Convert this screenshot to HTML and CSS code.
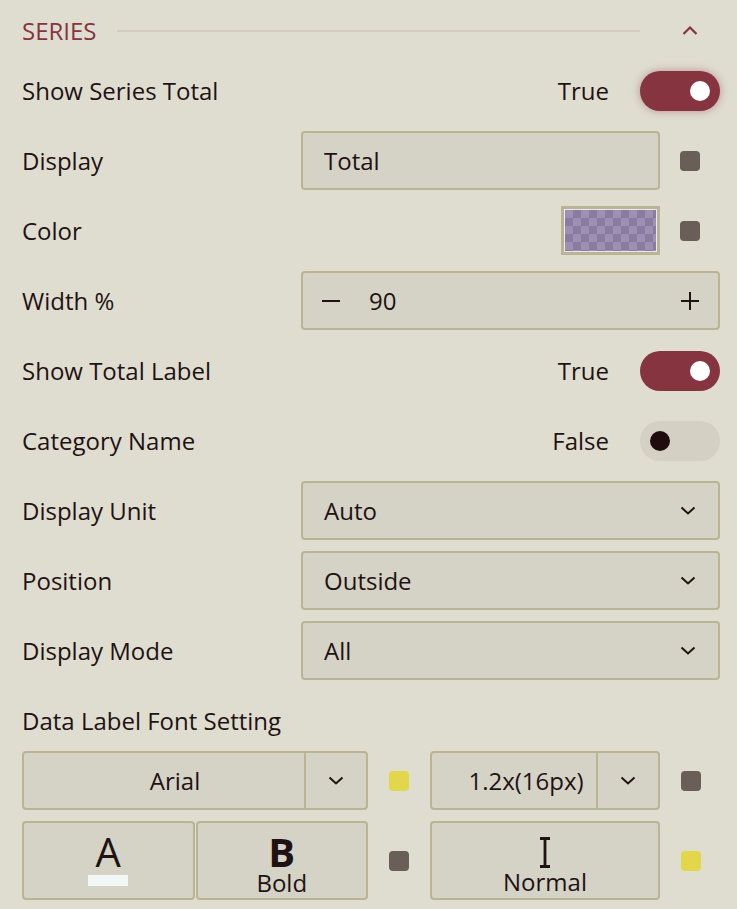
FILE: index.html
```html
<!DOCTYPE html>
<html>
<head>
    <meta charset="utf-8">
    <title>Series</title>
    <link rel="stylesheet" href="styles.css">
</head>
<body>
    <div class="panel">
        <!-- 标题 -->
        <div class="head">
            <span class="head_title">SERIES</span>
            <span class="head_line"></span>
            <svg class="head_arrow" width="16" height="9" viewBox="0 0 16 9"><polyline points="1.5,8 8,1.5 14.5,8" fill="none" stroke="#853440" stroke-width="2.2"/></svg>
        </div>

        <div class="rows">
            <div class="row">
                <div class="label">Show Series Total</div>
                <div class="switch_wrap">
                    <span class="switch_text">True</span>
                    <span class="switch on glow"><i></i></span>
                </div>
            </div>

            <div class="row">
                <div class="label">Display</div>
                <div class="ctrl">
                    <div class="field">Total</div>
                    <span class="dot gray"></span>
                </div>
            </div>

            <div class="row">
                <div class="label">Color</div>
                <div class="ctrl end">
                    <div class="swatch"><div class="checker"></div></div>
                    <span class="dot gray"></span>
                </div>
            </div>

            <div class="row">
                <div class="label">Width %</div>
                <div class="field stepper">
                    <svg width="18" height="18" viewBox="0 0 18 18"><path d="M0 9H18" stroke="#1f1213" stroke-width="2"/></svg>
                    <span class="step_val">90</span>
                    <svg width="18" height="18" viewBox="0 0 18 18"><path d="M0 9H18M9 0V18" stroke="#1f1213" stroke-width="2"/></svg>
                </div>
            </div>

            <div class="row">
                <div class="label">Show Total Label</div>
                <div class="switch_wrap">
                    <span class="switch_text">True</span>
                    <span class="switch on"><i></i></span>
                </div>
            </div>

            <div class="row">
                <div class="label">Category Name</div>
                <div class="switch_wrap">
                    <span class="switch_text">False</span>
                    <span class="switch"><i></i></span>
                </div>
            </div>

            <div class="row">
                <div class="label">Display Unit</div>
                <div class="field select">
                    <span>Auto</span>
                    <svg width="16" height="9" viewBox="0 0 16 9"><polyline points="1.5,1.5 8,7.5 14.5,1.5" fill="none" stroke="#1f1213" stroke-width="2"/></svg>
                </div>
            </div>

            <div class="row">
                <div class="label">Position</div>
                <div class="field select">
                    <span>Outside</span>
                    <svg width="16" height="9" viewBox="0 0 16 9"><polyline points="1.5,1.5 8,7.5 14.5,1.5" fill="none" stroke="#1f1213" stroke-width="2"/></svg>
                </div>
            </div>

            <div class="row">
                <div class="label">Display Mode</div>
                <div class="field select">
                    <span>All</span>
                    <svg width="16" height="9" viewBox="0 0 16 9"><polyline points="1.5,1.5 8,7.5 14.5,1.5" fill="none" stroke="#1f1213" stroke-width="2"/></svg>
                </div>
            </div>

            <div class="row">
                <div class="label">Data Label Font Setting</div>
            </div>

            <!-- 字体设置 -->
            <div class="font_grid">
                <div class="field combo">
                    <span class="combo_text pad_l">Arial</span>
                    <span class="combo_btn"><svg width="16" height="9" viewBox="0 0 16 9"><polyline points="1.5,1.5 8,7.5 14.5,1.5" fill="none" stroke="#1f1213" stroke-width="2"/></svg></span>
                </div>
                <span class="dot yellow"></span>
                <div class="field combo">
                    <span class="combo_text pad_r">1.2x(16px)</span>
                    <span class="combo_btn"><svg width="16" height="9" viewBox="0 0 16 9"><polyline points="1.5,1.5 8,7.5 14.5,1.5" fill="none" stroke="#1f1213" stroke-width="2"/></svg></span>
                </div>
                <span class="dot gray"></span>

                <div class="btn_pair">
                    <div class="field tbtn">
                        <span class="glyph">A</span>
                        <span class="color_bar"></span>
                    </div>
                    <div class="field tbtn">
                        <span class="glyph bold">B</span>
                        <span class="tbtn_text">Bold</span>
                    </div>
                </div>
                <span class="dot gray"></span>
                <div class="field tbtn">
                    <svg class="ibeam" width="12" height="31" viewBox="0 0 12 31"><path d="M1 1.5H11M6 1.5V29.5M1 29.5H11" fill="none" stroke="#1f1213" stroke-width="2.8"/></svg>
                    <span class="tbtn_text">Normal</span>
                </div>
                <span class="dot yellow"></span>
            </div>
        </div>
    </div>
</body>
</html>
```

FILE: styles.css
```css
html,body,div,span{margin:0;padding:0;}
body{background:#dfddd0; font-family:"Open Sans","Noto Sans",sans-serif; color:#1f1213; font-size:24px;}

.panel{padding:0 17px 0 22px;}

.head{height:61px; display:flex; align-items:center;}
.head_title{color:#853440; width:95px;}
.head_line{flex:1; height:2px; background:#d6cbc0; margin-right:42px;}
.head_arrow{margin-right:22px;}

.rows{display:flex; flex-direction:column; gap:11px;}
.row{height:59px; display:flex; align-items:center;}
.label{width:279px; flex:none;}

.ctrl{flex:1; display:flex; align-items:center;}
.ctrl.end{justify-content:flex-end;}

.field{background:#d5d3c6; border:2px solid #b9b493; border-radius:4px; box-sizing:border-box; height:59px; display:flex; align-items:center;}
.ctrl .field{flex:1; padding-left:21px;}

.dot{width:20px; height:20px; border-radius:4px; flex:none; margin-left:20px; margin-right:20px;}
.dot.gray{background:#6a5e58;}
.dot.yellow{background:#e2d64a;}

.swatch{width:99px; height:49px; box-sizing:border-box; border:3px solid #b9b493; padding:1px; background:#ebe8ec;}
.checker{width:100%; height:100%;
    background:repeating-conic-gradient(#8b7ba1 0 25%, #9d8fb5 0 50%) 0 0/16px 16px;}

.stepper{flex:1; padding:0 19px;}
.step_val{flex:1; margin-left:29px;}

.select{flex:1; padding:0 22px 0 21px; justify-content:space-between;}

.switch_wrap{flex:1; display:flex; align-items:center; justify-content:flex-end;}
.switch_text{margin-right:31px;}
.switch{width:80px; height:40px; border-radius:20px; background:#d4d1c4; position:relative; flex:none;}
.switch i{position:absolute; width:20px; height:20px; border-radius:50%; top:10px; left:10px; background:#1e0c0e;}
.switch.on{background:#853440;}
.switch.on i{left:50px; background:#fff;}
.switch.glow{box-shadow:0 0 9px rgba(133,52,64,0.45);}

.font_grid{display:grid; grid-template-columns:346px 20px 230px 20px; column-gap:21px; row-gap:11px; align-items:center; margin-top:-10px;}
.font_grid .dot{margin:0;}
.combo{padding:0;}
.combo_text{flex:1; text-align:center;}
.combo_text.pad_l{padding-left:22px;}
.combo_text.pad_r{padding-left:24px;}
.combo_btn{width:62px; height:100%; border-left:2px solid #b9b493; display:flex; align-items:center; justify-content:center; box-sizing:border-box;}

.btn_pair{display:flex; gap:1px;}
.btn_pair .tbtn{flex:1;}
.tbtn{height:79px; flex-direction:column; justify-content:flex-start; padding-top:12px;}
.glyph{font-size:40px; line-height:34px;}
.glyph.bold{font-weight:bold;}
.color_bar{width:40px; height:11px; background:#f3f8f6; margin-top:6px;}
.tbtn_text{font-size:24px; line-height:26px; margin-top:1px;}
.ibeam{margin:2px 0 1px;}
.ibeam + .tbtn_text{margin-top:0;}
```
